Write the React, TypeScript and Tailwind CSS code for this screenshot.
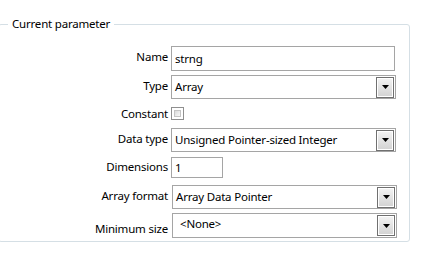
const font = { fontFamily: '"Noto Sans", "Open Sans", sans-serif' }

const Arrow = () => (
	<div className="w-[18px] h-[21px] border border-[#707070] bg-gradient-to-b from-[#f4f4f4] to-[#d2d2d2] flex items-center justify-center shadow-[inset_0_0_0_1px_#ffffff]">
		<svg width="7" height="4" viewBox="0 0 7 4">
			<path d="M0 0H7L3.5 4Z" fill="#000" />
		</svg>
	</div>
)

const Combo = ({ value, h = 'h-[24px]', pad = 'pl-[3px]' }: { value: string; h?: string; pad?: string }) => (
	<div className={`${h} w-[225px] border border-[#a5a5a5] bg-white flex items-center pr-[1px]`}>
		<span className={`flex-1 ${pad} text-black`}>{value}</span>
		<Arrow />
	</div>
)

const Label = ({ children, className = '' }: { children: string; className?: string }) => (
	<div className={`w-[170px] text-right pr-[1px] text-black ${className}`}>{children}</div>
)

export default function App() {
	return (
		<div
			className="w-[430px] h-[262px] bg-white overflow-hidden text-[11.5px] leading-[16px] tracking-[-0.2px]"
			style={font}
		>
			<div className="pt-[24px]">
				<div className="relative -ml-[2px] w-[412px] h-[218px] border border-[#d5dfe5] rounded-[3px]">
					<span className="absolute -top-[9px] left-[9px] px-[4px] bg-white text-black">
						Current parameter
					</span>

					<div className="flex flex-col">
						<div className="mt-[21px] flex items-center h-[25px]">
							<Label className="-mt-[3px]">Name</Label>
							<div className="ml-[2px] h-[25px] w-[224px] border border-[#a5a5a5] flex items-center pl-[3px]">
								strng
							</div>
						</div>

						<div className="mt-[4px] flex items-center">
							<Label className="-mt-[3px]">Type</Label>
							<div className="ml-[2px]">
								<Combo value="Array" />
							</div>
						</div>

						<div className="mt-[8px] flex items-center h-[13px]">
							<Label>Constant</Label>
							<div className="ml-[2px] w-[13px] h-[13px] border border-[#8f8f8f] bg-white p-[2px]">
								<div className="w-full h-full border border-[#c4c4c4] bg-gradient-to-br from-[#dadada] to-[#f8f8f8]" />
							</div>
						</div>

						<div className="mt-[8px] flex items-center">
							<Label className="-mt-[3px]">Data type</Label>
							<div className="ml-[2px]">
								<Combo value="Unsigned Pointer-sized Integer" />
							</div>
						</div>

						<div className="mt-[5px] flex items-center">
							<Label className="-mt-[2px]">Dimensions</Label>
							<div className="ml-[2px] h-[21px] w-[52px] border border-[#a5a5a5] flex items-center pl-[3px]">
								1
							</div>
						</div>

						<div className="mt-[7px] flex items-center">
							<Label className="-mt-[3px]">Array format</Label>
							<div className="ml-[3px]">
								<Combo value="Array Data Pointer" />
							</div>
						</div>

						<div className="mt-[4px] flex items-end">
							<Label className="mb-[1px]">Minimum size</Label>
							<div className="ml-[3px]">
								<Combo value="<None>" h="h-[25px]" pad="pl-[7px] -mt-[3px]" />
							</div>
						</div>
					</div>
				</div>
			</div>
		</div>
	)
}
